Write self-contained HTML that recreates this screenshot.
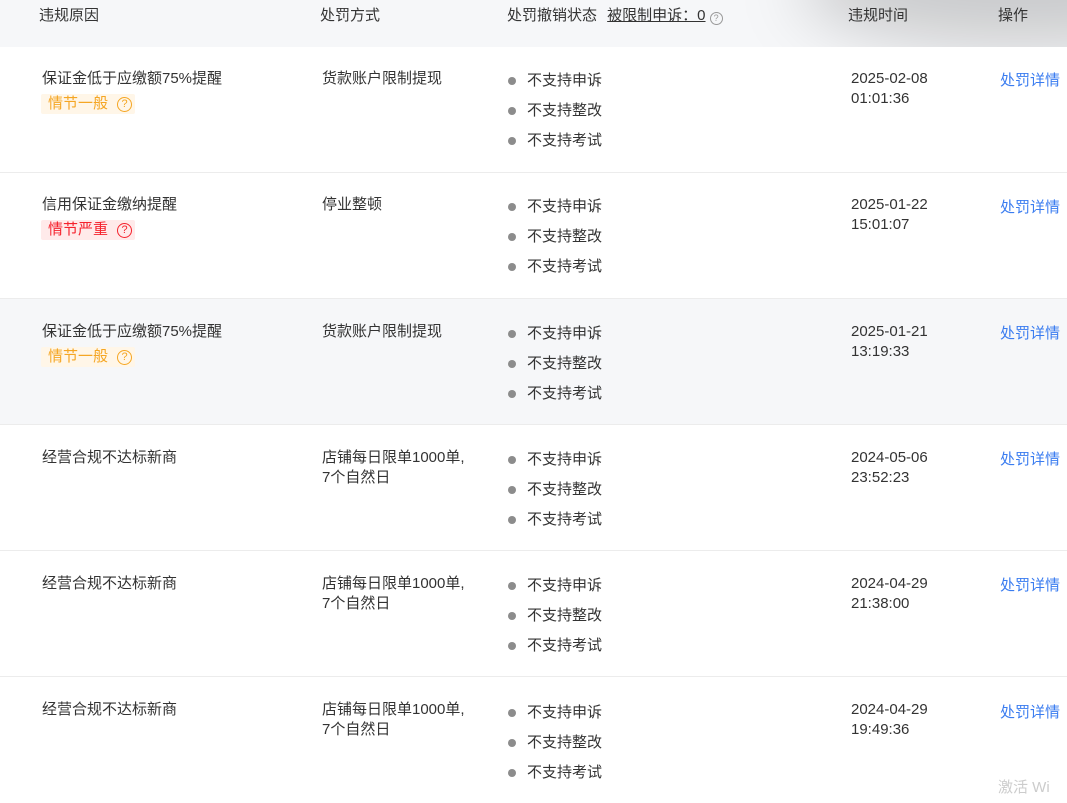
<!DOCTYPE html>
<html><head><meta charset="utf-8"><style>
*{margin:0;padding:0;box-sizing:border-box}
body{width:1067px;height:788px;overflow:hidden;background:#fff;font-family:"Liberation Sans","Noto Sans CJK SC",sans-serif;font-size:15px;color:#333;position:relative}
.hdr{position:absolute;left:0;top:0;width:1067px;height:47px;background:#f6f7f9;overflow:hidden}
.shadow{position:absolute;left:800px;top:-70px;width:440px;height:115px;background:rgba(0,0,0,0.18);filter:blur(32px);border-radius:50%}
.h{position:absolute;top:4px;color:#333;font-size:15px}
.row{position:absolute;left:0;width:1067px;height:126px;border-bottom:1px solid #ececec}
.row>*{transform:translateY(2px)}
.t{position:absolute;line-height:20px}
.tag{position:absolute;left:41px;top:45px;height:20px;width:94px;padding-left:7px;font-size:15px;line-height:20px;border-radius:2px;display:flex;align-items:center}
.q{display:inline-block;width:15px;height:15px;border:1px solid;border-radius:50%;font-size:11px;line-height:13px;text-align:center;margin-left:9px}
.warn{background:#fff6e8;color:#f5a623}
.err{background:#ffeaea;color:#f5222d}
.b{position:absolute;left:508px;width:8px;height:8px;border-radius:50%;background:#8c8c8c}
.a{color:#3a7cf0}
</style></head><body>
<div class="hdr"><div class="shadow"></div>
<div class="h" style="left:39px">违规原因</div>
<div class="h" style="left:320px">处罚方式</div>
<div class="h" style="left:507px">处罚撤销状态 <span style="margin-left:6px;text-decoration:underline">被限制申诉：0</span> <span style="display:inline-block;width:13px;height:13px;border:1px solid #999;border-radius:50%;font-size:9px;line-height:11px;text-align:center;color:#999;vertical-align:-1px">?</span></div>
<div class="h" style="left:848px">违规时间</div>
<div class="h" style="left:998px">操作</div>
</div>

<div class="row" style="top:47px">
<div class="t" style="left:42px;top:20px">保证金低于应缴额75%提醒</div>
<div class="tag warn">情节一般<span class="q">?</span></div>
<div class="t" style="left:322px;top:20px">货款账户限制提现</div>
<div class="b" style="top:28px"></div><div class="t" style="left:527px;top:22px">不支持申诉</div>
<div class="b" style="top:58px"></div><div class="t" style="left:527px;top:52px">不支持整改</div>
<div class="b" style="top:88px"></div><div class="t" style="left:527px;top:82px">不支持考试</div>
<div class="t" style="left:851px;top:20px">2025-02-08<br>01:01:36</div>
<div class="t a" style="left:1000px;top:22px">处罚详情</div>
</div>

<div class="row" style="top:173px">
<div class="t" style="left:42px;top:20px">信用保证金缴纳提醒</div>
<div class="tag err">情节严重<span class="q">?</span></div>
<div class="t" style="left:322px;top:20px">停业整顿</div>
<div class="b" style="top:28px"></div><div class="t" style="left:527px;top:22px">不支持申诉</div>
<div class="b" style="top:58px"></div><div class="t" style="left:527px;top:52px">不支持整改</div>
<div class="b" style="top:88px"></div><div class="t" style="left:527px;top:82px">不支持考试</div>
<div class="t" style="left:851px;top:20px">2025-01-22<br>15:01:07</div>
<div class="t a" style="left:1000px;top:23px">处罚详情</div>
</div>

<div class="row" style="top:299px;background:#f6f7f9">
<div class="t" style="left:42px;top:21px">保证金低于应缴额75%提醒</div>
<div class="tag warn" style="top:46px">情节一般<span class="q">?</span></div>
<div class="t" style="left:322px;top:21px">货款账户限制提现</div>
<div class="b" style="top:29px"></div><div class="t" style="left:527px;top:23px">不支持申诉</div>
<div class="b" style="top:59px"></div><div class="t" style="left:527px;top:53px">不支持整改</div>
<div class="b" style="top:89px"></div><div class="t" style="left:527px;top:83px">不支持考试</div>
<div class="t" style="left:851px;top:21px">2025-01-21<br>13:19:33</div>
<div class="t a" style="left:1000px;top:23px">处罚详情</div>
</div>

<div class="row" style="top:425px">
<div class="t" style="left:42px;top:21px">经营合规不达标新商</div>
<div class="t" style="left:322px;top:21px">店铺每日限单1000单,<br>7个自然日</div>
<div class="b" style="top:29px"></div><div class="t" style="left:527px;top:23px">不支持申诉</div>
<div class="b" style="top:59px"></div><div class="t" style="left:527px;top:53px">不支持整改</div>
<div class="b" style="top:89px"></div><div class="t" style="left:527px;top:83px">不支持考试</div>
<div class="t" style="left:851px;top:21px">2024-05-06<br>23:52:23</div>
<div class="t a" style="left:1000px;top:23px">处罚详情</div>
</div>

<div class="row" style="top:551px">
<div class="t" style="left:42px;top:21px">经营合规不达标新商</div>
<div class="t" style="left:322px;top:21px">店铺每日限单1000单,<br>7个自然日</div>
<div class="b" style="top:29px"></div><div class="t" style="left:527px;top:23px">不支持申诉</div>
<div class="b" style="top:59px"></div><div class="t" style="left:527px;top:53px">不支持整改</div>
<div class="b" style="top:89px"></div><div class="t" style="left:527px;top:83px">不支持考试</div>
<div class="t" style="left:851px;top:21px">2024-04-29<br>21:38:00</div>
<div class="t a" style="left:1000px;top:23px">处罚详情</div>
</div>

<div class="row" style="top:677px;border-bottom:none">
<div class="t" style="left:42px;top:21px">经营合规不达标新商</div>
<div class="t" style="left:322px;top:21px">店铺每日限单1000单,<br>7个自然日</div>
<div class="b" style="top:30px"></div><div class="t" style="left:527px;top:24px">不支持申诉</div>
<div class="b" style="top:60px"></div><div class="t" style="left:527px;top:54px">不支持整改</div>
<div class="b" style="top:90px"></div><div class="t" style="left:527px;top:84px">不支持考试</div>
<div class="t" style="left:851px;top:21px">2024-04-29<br>19:49:36</div>
<div class="t a" style="left:1000px;top:24px">处罚详情</div>
</div>
<div class="t" style="left:998px;top:778px;color:#ccc;font-size:15px">激活 Wi</div>
</body></html>
